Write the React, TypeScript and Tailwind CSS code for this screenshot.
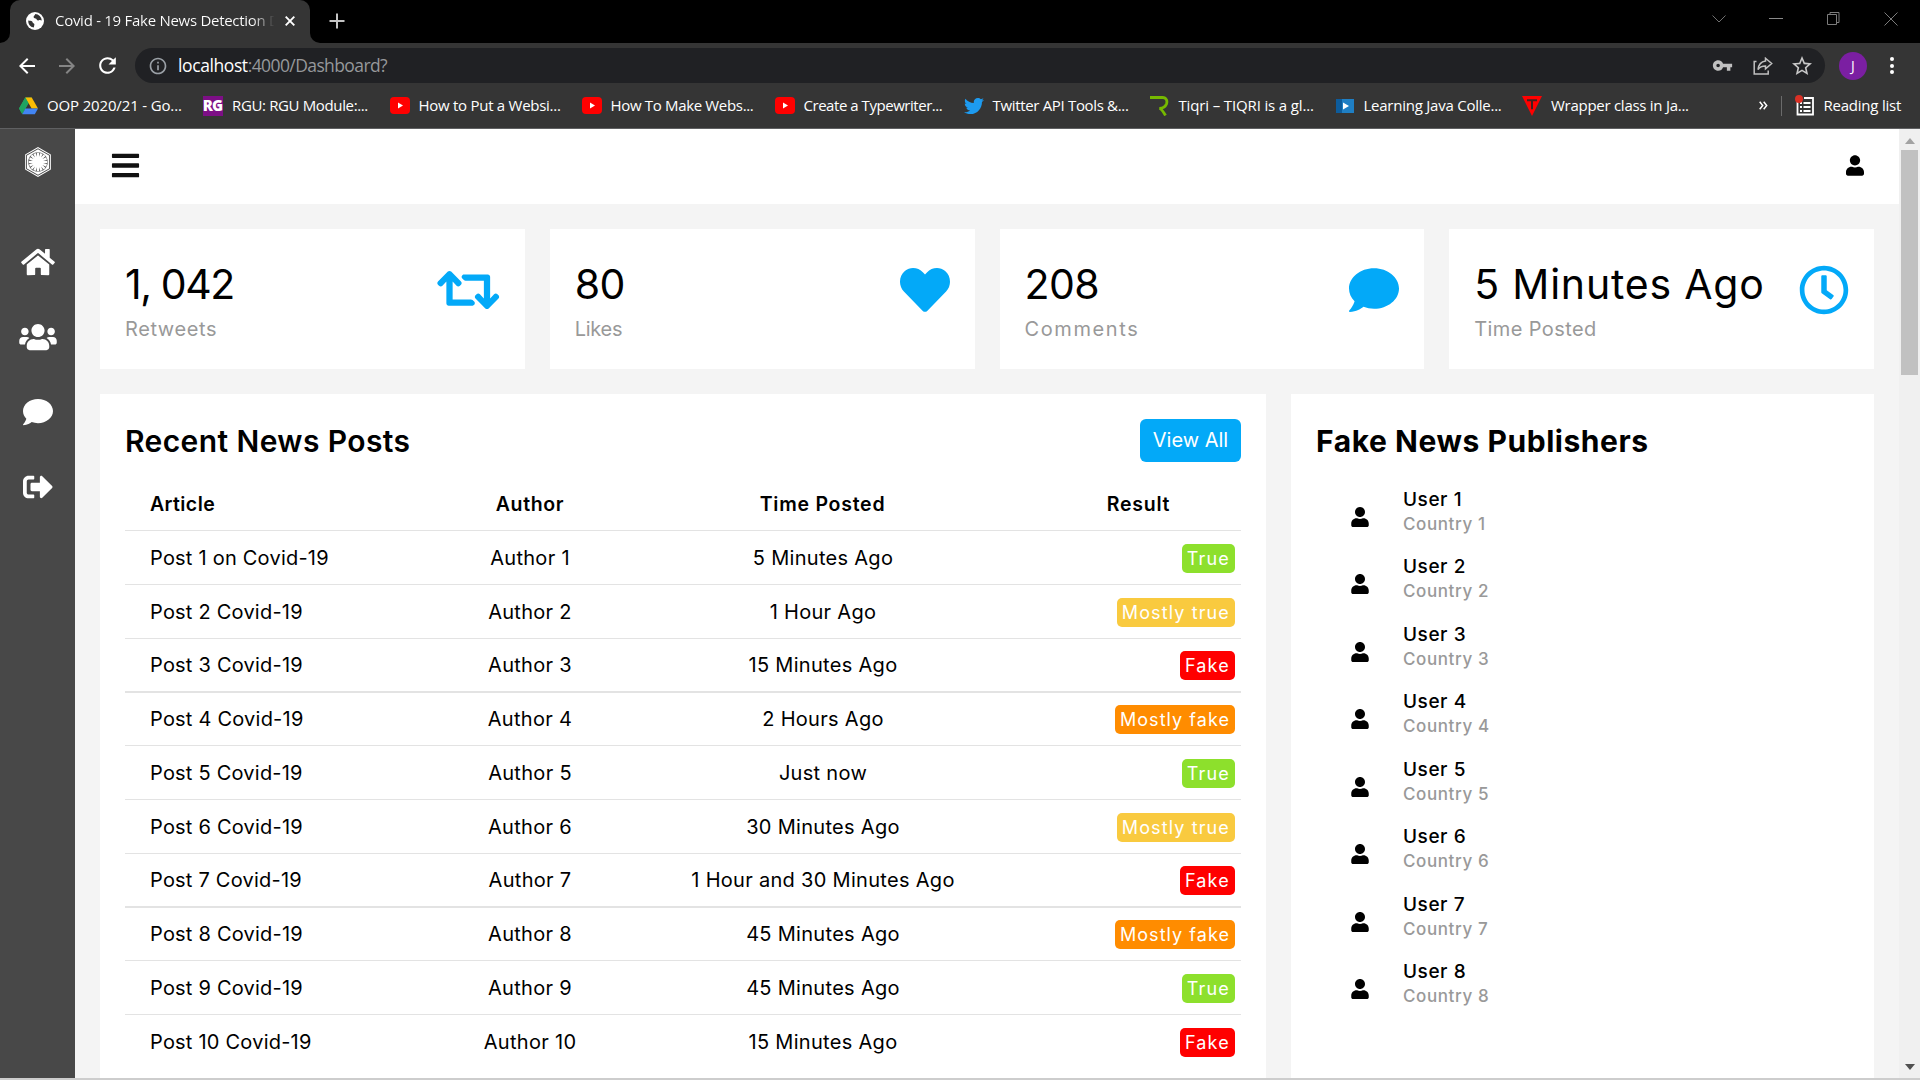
import React from 'react';
import type { ReactNode } from 'react';
import {
  FaBars,
  FaComment,
  FaFirstOrder,
  FaHeart,
  FaHome,
  FaRegClock,
  FaRetweet,
  FaSignOutAlt,
  FaTwitter,
  FaUser,
  FaUsers,
} from 'react-icons/fa';
import { MdArrowBack, MdArrowForward, MdRefresh, MdInfoOutline, MdVpnKey, MdStarBorder } from 'react-icons/md';

/* ---------- Browser chrome ---------- */

function GlobeIcon() {
  return (
    <svg viewBox="0 0 18 18" className="-ml-px size-[18px] shrink-0">
      <circle cx="9" cy="9" r="9" fill="#fff" />
      <path
        d="M2.2 8.4c1.6.2 3.2.3 4 1 .6.6.4 1.400 1.200 1.800.9.3 1.200.9.9 1.900-.2.9-.2 1.700-.6 2.400A7 7 0 0 1 2.200 8.400z"
        fill="#353535"
      />
      <path
        d="M9.300 2.100c-.2 1.300-1.500 1.500-1.700 2.700-.1 1 .9 1.600 1.900 1.800 1.300.2 1.100 1.600 2.300 1.900.9.200 1.100-.7 2.100-.5.700.1 1.300.3 1.900.500A7 7 0 0 0 9.300 2.100z"
        fill="#353535"
      />
    </svg>
  );
}

function TabStrip() {
  return (
    <div className="flex h-[43px] shrink-0 bg-black pl-[10px]">
      <div className="relative flex h-[43px] w-[300px] items-center rounded-t-[10px] bg-[#353535] pb-px pl-[17px]">
        <span className="absolute -left-[10px] bottom-0 size-[10px] bg-[#353535]">
          <span className="block size-full rounded-br-[10px] bg-black" />
        </span>
        <span className="absolute -right-[10px] bottom-0 size-[10px] bg-[#353535]">
          <span className="block size-full rounded-bl-[10px] bg-black" />
        </span>
        <GlobeIcon />
        <span className="mb-[2px] ml-[11px] w-[224px] bg-gradient-to-r from-white from-88% to-transparent to-98% bg-clip-text text-[15px] leading-5 tracking-[-0.28px] whitespace-nowrap text-transparent">
          Covid - 19 Fake News Detection D
        </span>
        <svg viewBox="0 0 10 10" className="ml-[6px] size-[10px]" stroke="#fff" strokeWidth="1.9">
          <path d="M.7.7l8.600 8.600M9.300.7L.7 9.300" />
        </svg>
      </div>
      <svg viewBox="0 0 16 16" className="mt-[13px] ml-[19px] size-4" stroke="#c4c4c4" strokeWidth="2">
        <path d="M8 .5v15M.5 8h15" />
      </svg>
      <div className="mr-[22px] ml-auto flex items-center gap-[43px] pb-[6px]">
        <svg viewBox="0 0 14 8" className="h-2 w-[14px]" fill="none" stroke="#707070">
          <path d="M.5.500l6.500 6.500L13.500.500" />
        </svg>
        <div className="h-px w-[14px] bg-[#8a8a8a]" />
        <svg viewBox="0 0 15 15" className="size-[15px]" fill="none" stroke="#7c7c7c">
          <path d="M1.500 3.500h9v10h-9zM4 3.500v-2h9v10h-2.500" />
        </svg>
        <svg viewBox="0 0 14 14" className="size-[14px]" fill="none" stroke="#7c7c7c">
          <path d="M.5.500l13 13M13.500.500l-13 13" />
        </svg>
      </div>
    </div>
  );
}

function Toolbar() {
  return (
    <div className="flex h-[45px] shrink-0 items-center bg-[#353535] pl-[15px]">
      <MdArrowBack className="size-6 text-white" />
      <MdArrowForward className="ml-4 size-6 text-[#858585]" />
      <MdRefresh className="ml-4 size-[25px] text-white" />
      <div className="ml-[15px] flex h-[35px] w-[1690px] items-center rounded-full bg-[#202124] pr-[11px] pl-[13px]">
        <MdInfoOutline className="size-5 text-[#9aa0a6]" />
        <span className="mb-px ml-[10px] text-[17.500px] leading-6 whitespace-nowrap">
          <span className="tracking-[-0.400px] text-white">localhost</span>
          <span className="tracking-[-0.600px] text-[#96989b]">:4000/Dashboard?</span>
        </span>
        <MdVpnKey className="mr-[20px] ml-auto size-[21px] text-[#c0c0c0]" />
        <svg viewBox="0 0 20 18" className="mr-[17px] h-[18px] w-5" fill="none" stroke="#c0c0c0" strokeWidth="1.500">
          <path d="M3.500 4.500H1.200v12.500h14v-3.500" />
          <path d="M12.500 1.200l6.200 5.300-6.200 5.300V9c-3.500 0-6 1.200-7.500 3.500.5-4.500 3-7.800 7.500-8.500z" />
        </svg>
        <MdStarBorder className="size-[24px] text-[#c8c8c8]" />
      </div>
      <div className="ml-[14px] flex size-7 items-center justify-center rounded-full bg-[#7b1fa2] text-[14px] text-white">
        J
      </div>
      <div className="ml-[23px] flex flex-col gap-[2.500px]">
        <span className="size-1 rounded-full bg-white" />
        <span className="size-1 rounded-full bg-white" />
        <span className="size-1 rounded-full bg-white" />
      </div>
    </div>
  );
}

function DriveIcon() {
  return (
    <svg viewBox="0 0 20 18" className="h-[18px] w-[19px]">
      <path d="M6.600 0h6.800L6.800 11.500 3.400 17.500 0 11.700z" fill="#34a853" />
      <path d="M6.600 0h6.800L20 11.700h-6.700z" fill="#fbbc04" />
      <path d="M6.600 0L10 6 3.400 17.500 0 11.700z" fill="#1ea362" />
      <path d="M6.700 11.700H20l-3.400 6H3.400z" fill="#4285f4" />
    </svg>
  );
}

function RguIcon() {
  return (
    <span className="-ml-px flex h-5 w-5 items-center justify-center bg-[#7d0f86] text-[15px] leading-none font-extrabold tracking-[-1px] text-white">
      RG
    </span>
  );
}

function YouTubeIcon() {
  return (
    <svg viewBox="0 0 20 17" className="h-[17px] w-5">
      <rect width="20" height="17" rx="4" fill="#f00" />
      <path d="M8 5.500l5 3-5 3z" fill="#fff" />
    </svg>
  );
}

function TiqriIcon() {
  return (
    <svg viewBox="0 0 19 20" className="h-5 w-[19px]" fill="none" stroke="#76b900" strokeWidth="2.800">
      <path d="M0 1.500h12.500c4 0 5 3.500 4 6.500-1 2.500-3 4-7 4.500 2 .5 3.500 2.500 6 7" />
    </svg>
  );
}

function PlayIcon() {
  return (
    <svg viewBox="0 0 18 14" className="h-[14px] w-[18px]">
      <rect width="18" height="14" fill="#1f7fc4" />
      <path d="M0 0h6v14H0z" fill="#0d5c9c" />
      <path d="M7 3.500l6 3.500-6 3.500z" fill="#fff" />
    </svg>
  );
}

function WrapperIcon() {
  return (
    <svg viewBox="0 0 20 20" className="size-5">
      <path d="M0 0h20L10 20z" fill="#f00" />
      <path d="M5 4.200h10M10 4.200v9" stroke="#40211f" strokeWidth="2" />
    </svg>
  );
}

function Bookmark({ icon, className, children }: { icon: ReactNode; className: string; children: ReactNode }) {
  return (
    <div className={`flex shrink-0 items-center whitespace-nowrap ${className}`}>
      <span className="flex w-5 shrink-0 justify-center">{icon}</span>
      <span className="mb-[2px] ml-[9px]">{children}</span>
    </div>
  );
}

function BookmarksBar() {
  return (
    <div className="flex h-[41px] shrink-0 items-center border-b border-[#5f6062] bg-[#353535] pb-[5px] pl-[18px] text-[15px] leading-5 text-white">
      <Bookmark icon={<DriveIcon />} className="w-[185px] tracking-[-0.15px]">
        OOP 2020/21 - Go...
      </Bookmark>
      <Bookmark icon={<RguIcon />} className="w-[186.500px] tracking-[-0.36px]">
        RGU: RGU Module:...
      </Bookmark>
      <Bookmark icon={<YouTubeIcon />} className="w-[192px] tracking-[-0.27px]">
        How to Put a Websi...
      </Bookmark>
      <Bookmark icon={<YouTubeIcon />} className="w-[193px] tracking-[-0.33px]">
        How To Make Webs...
      </Bookmark>
      <Bookmark icon={<YouTubeIcon />} className="w-[189px] tracking-[-0.46px]">
        Create a Typewriter...
      </Bookmark>
      <Bookmark icon={<FaTwitter className="size-5 text-[#1d9bf0]" />} className="w-[186px] tracking-[-0.33px]">
        Twitter API Tools &amp;...
      </Bookmark>
      <Bookmark icon={<TiqriIcon />} className="w-[185px] tracking-[-0.14px]">
        Tiqri – TIQRI is a gl...
      </Bookmark>
      <Bookmark icon={<PlayIcon />} className="w-[187.500px] tracking-[-0.24px]">
        Learning Java Colle...
      </Bookmark>
      <Bookmark icon={<WrapperIcon />} className="w-[180px] tracking-[-0.27px]">
        Wrapper class in Ja...
      </Bookmark>
      <svg viewBox="0 0 9 9" className="mr-[13px] ml-auto size-[9px]" fill="none" stroke="#fff" strokeWidth="1.500">
        <path d="M.7.700l3 3.800-3 3.800M4.700.700l3 3.800-3 3.800" />
      </svg>
      <div className="h-5 w-px bg-[#6b6b6b]" />
      <svg viewBox="0 0 20 21" className="ml-[13px] h-[21px] w-5" fill="none" stroke="#fff" strokeWidth="1.800">
        <path d="M2.500 7v12.500h15.500V3H9" />
        <path d="M5 8h2M8.500 8h7M5 12h2M8.500 12h7M5 16h2M8.500 16h7" />
        <circle cx="4" cy="4" r="4" fill="#d93025" stroke="none" />
      </svg>
      <span className="mr-[19px] mb-[2px] ml-[9px] tracking-[-0.24px]">Reading list</span>
    </div>
  );
}

/* ---------- Dashboard ---------- */

function Sidebar() {
  return (
    <nav className="flex w-[75px] shrink-0 flex-col items-center bg-[#484848] text-[30px] text-white">
      <div className="flex h-[66px] items-center">
        <FaFirstOrder />
      </div>
      <div className="mt-[29px] flex h-[75px] items-center">
        <FaHome className="h-[30px] w-[34px]" />
      </div>
      <div className="flex h-[75px] items-center">
        <FaUsers className="h-[30px] w-[38px]" />
      </div>
      <div className="flex h-[75px] items-center">
        <FaComment />
      </div>
      <div className="flex h-[75px] items-center">
        <FaSignOutAlt />
      </div>
    </nav>
  );
}

function StatCard({ value, label, icon }: { value: ReactNode; label: ReactNode; icon: ReactNode }) {
  return (
    <div className="flex h-[140px] justify-between bg-white p-[25px] whitespace-nowrap">
      <div>
        <div className="text-[41px] leading-[60px] text-black">{value}</div>
        <div className="text-[20px] leading-[30px] text-[#999]">{label}</div>
      </div>
      <div className="mt-[11px] text-[50px] text-[#03a9f8]">{icon}</div>
    </div>
  );
}

type Verdict = 'True' | 'Mostly true' | 'Fake' | 'Mostly fake';

const verdictStyle: Record<Verdict, string> = {
  True: 'bg-[#8de02c] tracking-[1.2px]',
  'Mostly true': 'bg-[#f9ca3f] tracking-[1.12px]',
  Fake: 'bg-[#ff0000] tracking-[1.2px]',
  'Mostly fake': 'bg-[#ff8c00] tracking-[1.05px]',
};

const posts: { title: string; author: string; time: string; verdict: Verdict; row: string }[] = [
  { title: 'Post 1 on Covid-19', author: 'Author 1', time: '5 Minutes Ago', verdict: 'True', row: 'h-[54px] border-b' },
  { title: 'Post 2 Covid-19', author: 'Author 2', time: '1 Hour Ago', verdict: 'Mostly true', row: 'h-[54px] border-b' },
  { title: 'Post 3 Covid-19', author: 'Author 3', time: '15 Minutes Ago', verdict: 'Fake', row: 'h-[54px] border-b-2' },
  { title: 'Post 4 Covid-19', author: 'Author 4', time: '2 Hours Ago', verdict: 'Mostly fake', row: 'h-[53px] border-b' },
  { title: 'Post 5 Covid-19', author: 'Author 5', time: 'Just now', verdict: 'True', row: 'h-[54px] border-b' },
  { title: 'Post 6 Covid-19', author: 'Author 6', time: '30 Minutes Ago', verdict: 'Mostly true', row: 'h-[54px] border-b' },
  { title: 'Post 7 Covid-19', author: 'Author 7', time: '1 Hour and 30 Minutes Ago', verdict: 'Fake', row: 'h-[54px] border-b-2' },
  { title: 'Post 8 Covid-19', author: 'Author 8', time: '45 Minutes Ago', verdict: 'Mostly fake', row: 'h-[53px] border-b' },
  { title: 'Post 9 Covid-19', author: 'Author 9', time: '45 Minutes Ago', verdict: 'True', row: 'h-[54px] border-b' },
  { title: 'Post 10 Covid-19', author: 'Author 10', time: '15 Minutes Ago', verdict: 'Fake', row: 'h-[54px]' },
];

function RecentPosts() {
  return (
    <section className="bg-white p-[25px] pb-0">
      <div className="flex h-[43px] items-center justify-between">
        <h2 className="pt-[2px] text-[30px] font-semibold tracking-[0.400px]">Recent News Posts</h2>
        <button className="h-[43px] w-[101px] rounded-[6px] bg-[#03a9f8] pb-0.5 text-[20px] text-white">View All</button>
      </div>
      <div className="grid h-[69px] grid-cols-[305px_200px_385px_1fr] items-center border-b border-[#e3e3e3] pt-[18px] text-[19.500px] font-semibold">
        <span className="pl-[25px] tracking-[0.4px]">Article</span>
        <span className="text-center tracking-[0.65px]">Author</span>
        <span className="text-center tracking-[0.75px]">Time Posted</span>
        <span className="pl-[21px] text-center tracking-[0.75px]">Result</span>
      </div>
      {posts.map((post) => (
        <div
          key={post.title}
          className={`grid grid-cols-[305px_200px_385px_1fr] items-center border-[#e3e3e3] text-[20px] ${post.row}`}
        >
          <span className="pl-[25px] tracking-[0.22px]">{post.title}</span>
          <span className="text-center tracking-[0.3px]">{post.author}</span>
          <span className="pl-px text-center tracking-[0.3px]">{post.time}</span>
          <span className="flex justify-end pt-px pr-[6px]">
            <span
              className={`h-[29px] rounded-[5px] pr-[5px] pl-[5px] text-[18px] leading-[30px] text-white ${verdictStyle[post.verdict]}`}
            >
              {post.verdict}
            </span>
          </span>
        </div>
      ))}
    </section>
  );
}

function Publishers() {
  return (
    <section className="bg-white p-[25px] pb-0">
      <h2 className="flex h-[43px] items-center pt-[2px] text-[30px] font-bold tracking-[0.55px] whitespace-nowrap">
        Fake News Publishers
      </h2>
      <ul className="mt-[24.500px]">
        {[1, 2, 3, 4, 5, 6, 7, 8].map((n) => (
          <li key={n} className="flex h-[67.5px] items-start pl-[35px]">
            <FaUser className="mt-[20px] h-5 w-[18px]" />
            <div className="ml-[34px] font-medium">
              <div className="text-[19px] leading-[25px] tracking-[0.55px]">User {n}</div>
              <div className="text-[17px] leading-[25px] tracking-[0.6px] text-[#999]">Country {n}</div>
            </div>
          </li>
        ))}
      </ul>
    </section>
  );
}

function Scrollbar() {
  return (
    <div className="flex w-[21px] shrink-0 flex-col items-center bg-[#f0f0f0]">
      <svg viewBox="0 0 10 6" className="mt-[9px] h-[6px] w-[10px]" fill="#a3a3a3">
        <path d="M5 0l5 6H0z" />
      </svg>
      <div className="mt-[6px] h-[225px] w-[17px] bg-[#c1c1c1]" />
      <svg viewBox="0 0 10 6" className="mt-auto mb-[8px] h-[6px] w-[10px]" fill="#505050">
        <path d="M5 6L0 0h10z" />
      </svg>
    </div>
  );
}

export default function App() {
  return (
    <div className="flex h-[1080px] w-[1920px] flex-col overflow-hidden font-['Open_Sans',sans-serif]">
      <TabStrip />
      <Toolbar />
      <BookmarksBar />
      <div className="flex h-[949px] shrink-0 font-['Inter',sans-serif] text-black">
        <Sidebar />
        <div className="flex min-w-0 flex-1 flex-col bg-[#f4f4f4]">
          <header className="flex h-[75px] shrink-0 items-center justify-between bg-white pr-[35px] pb-[2px] pl-[34.500px]">
            <FaBars className="size-[31px] text-[#111]" />
            <FaUser className="h-[21px] w-[18px]" />
          </header>
          <main className="flex min-h-0 flex-1 flex-col gap-[25px] p-[25px] pb-0">
            <div className="grid grid-cols-4 gap-[25px]">
              <StatCard
                value={<span className="tracking-[-1.4px]">1, 042</span>}
                label={<span className="tracking-[0.6px]">Retweets</span>}
                icon={<FaRetweet className="h-[50px] w-[62.5px]" />}
              />
              <StatCard
                value={<span className="tracking-[-0.6px]">80</span>}
                label={<span className="tracking-[-0.3px]">Likes</span>}
                icon={<FaHeart />}
              />
              <StatCard
                value={<span className="tracking-[-0.6px]">208</span>}
                label={<span className="tracking-[1.600px]">Comments</span>}
                icon={<FaComment />}
              />
              <StatCard
                value={<span className="tracking-[0.8px]">5 Minutes Ago</span>}
                label={<span className="tracking-[0.4px]">Time Posted</span>}
                icon={<FaRegClock />}
              />
            </div>
            <div className="grid min-h-0 flex-1 grid-cols-[2fr_1fr] gap-[25px] overflow-hidden">
              <RecentPosts />
              <Publishers />
            </div>
          </main>
        </div>
        <Scrollbar />
      </div>
      <div className="h-0.5 shrink-0 bg-[#cdcdcd]" />
    </div>
  );
}
